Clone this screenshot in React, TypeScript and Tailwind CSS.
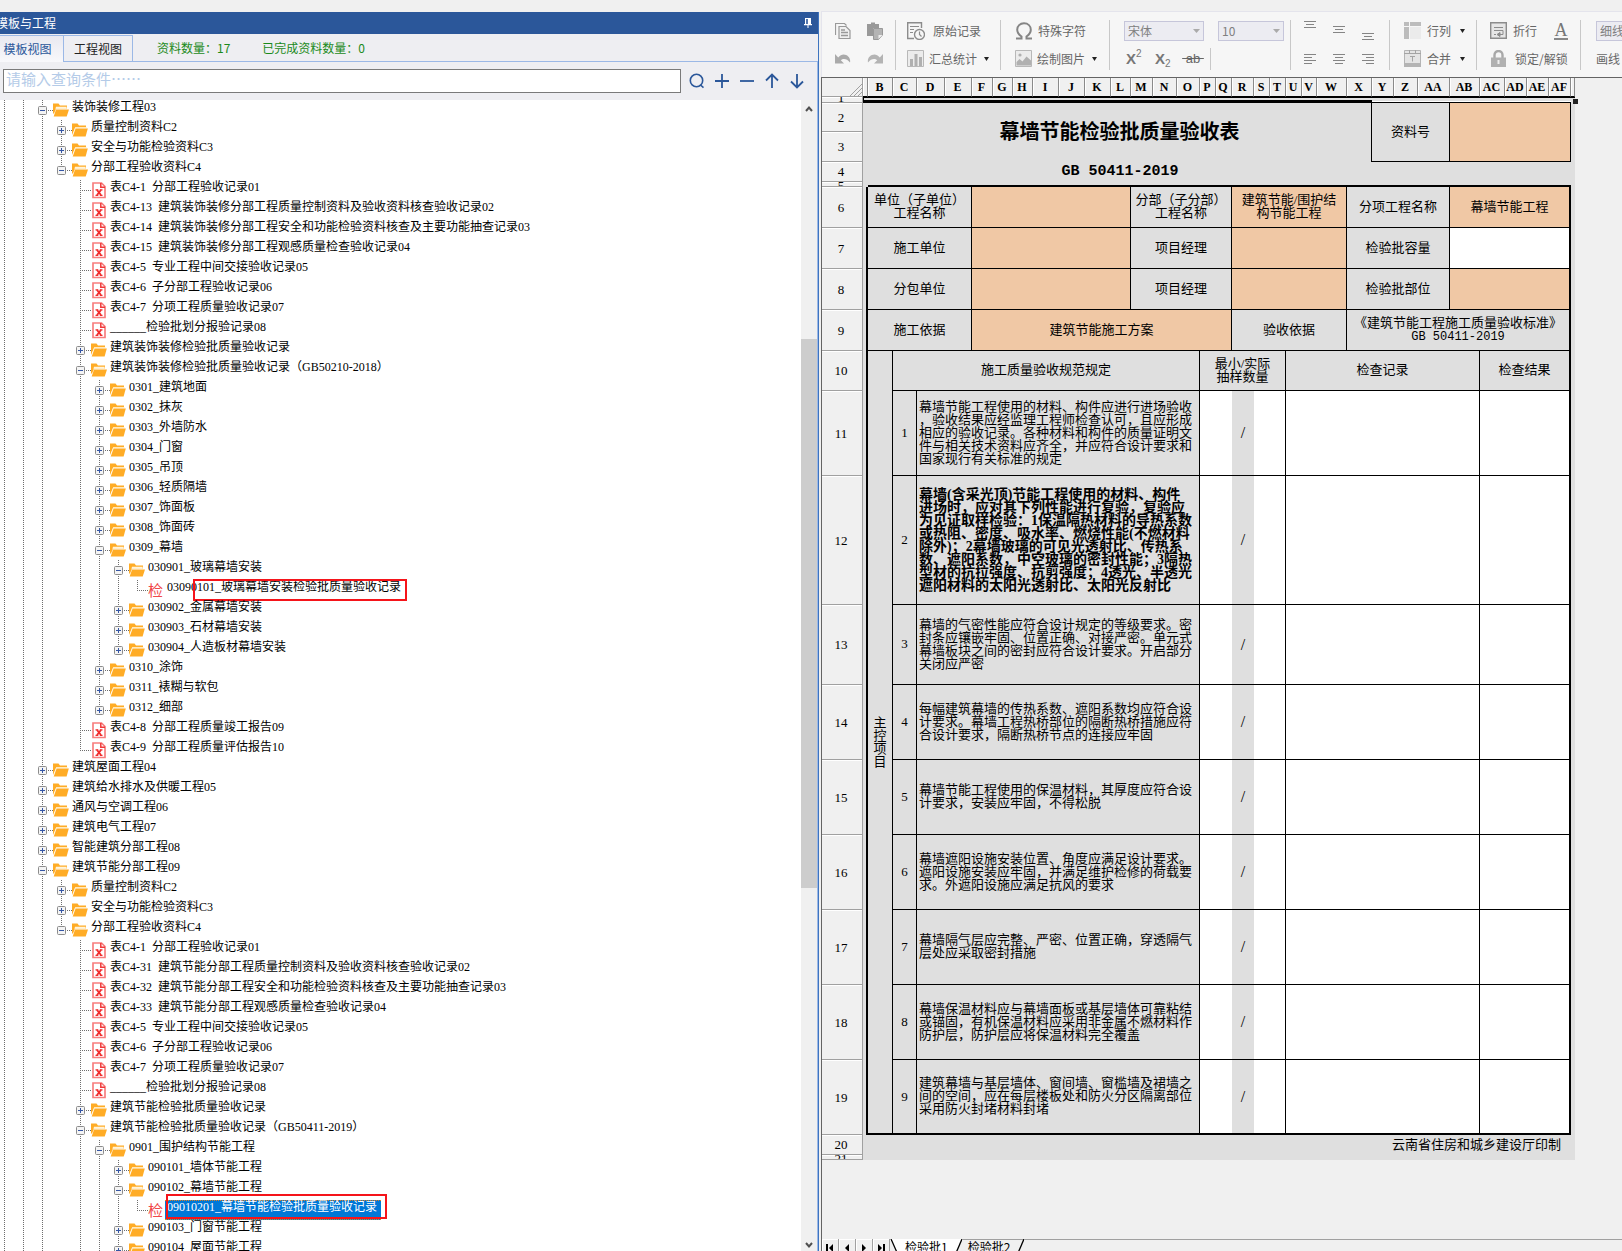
import React from "react";

type Kind = "open" | "closed" | "sheet" | "check";
type Node = { depth: number; kind: Kind; text: string; mark?: "box" | "selected" };

const n = (depth: number, kind: Kind, text: string, mark?: Node["mark"]): Node => ({ depth, kind, text, mark });

const NODES: Node[] = [
  n(0, "open", "装饰装修工程03"),
  n(1, "closed", "质量控制资料C2"),
  n(1, "closed", "安全与功能检验资料C3"),
  n(1, "open", "分部工程验收资料C4"),
  n(2, "sheet", "表C4-1  分部工程验收记录01"),
  n(2, "sheet", "表C4-13  建筑装饰装修分部工程质量控制资料及验收资料核查验收记录02"),
  n(2, "sheet", "表C4-14  建筑装饰装修分部工程安全和功能检验资料核查及主要功能抽查记录03"),
  n(2, "sheet", "表C4-15  建筑装饰装修分部工程观感质量检查验收记录04"),
  n(2, "sheet", "表C4-5  专业工程中间交接验收记录05"),
  n(2, "sheet", "表C4-6  子分部工程验收记录06"),
  n(2, "sheet", "表C4-7  分项工程质量验收记录07"),
  n(2, "sheet", "______检验批划分报验记录08"),
  n(2, "closed", "建筑装饰装修检验批质量验收记录"),
  n(2, "open", "建筑装饰装修检验批质量验收记录（GB50210-2018）"),
  n(3, "closed", "0301_建筑地面"),
  n(3, "closed", "0302_抹灰"),
  n(3, "closed", "0303_外墙防水"),
  n(3, "closed", "0304_门窗"),
  n(3, "closed", "0305_吊顶"),
  n(3, "closed", "0306_轻质隔墙"),
  n(3, "closed", "0307_饰面板"),
  n(3, "closed", "0308_饰面砖"),
  n(3, "open", "0309_幕墙"),
  n(4, "open", "030901_玻璃幕墙安装"),
  n(5, "check", "03090101_玻璃幕墙安装检验批质量验收记录", "box"),
  n(4, "closed", "030902_金属幕墙安装"),
  n(4, "closed", "030903_石材幕墙安装"),
  n(4, "closed", "030904_人造板材幕墙安装"),
  n(3, "closed", "0310_涂饰"),
  n(3, "closed", "0311_裱糊与软包"),
  n(3, "closed", "0312_细部"),
  n(2, "sheet", "表C4-8  分部工程质量竣工报告09"),
  n(2, "sheet", "表C4-9  分部工程质量评估报告10"),
  n(0, "closed", "建筑屋面工程04"),
  n(0, "closed", "建筑给水排水及供暖工程05"),
  n(0, "closed", "通风与空调工程06"),
  n(0, "closed", "建筑电气工程07"),
  n(0, "closed", "智能建筑分部工程08"),
  n(0, "open", "建筑节能分部工程09"),
  n(1, "closed", "质量控制资料C2"),
  n(1, "closed", "安全与功能检验资料C3"),
  n(1, "open", "分部工程验收资料C4"),
  n(2, "sheet", "表C4-1  分部工程验收记录01"),
  n(2, "sheet", "表C4-31  建筑节能分部工程质量控制资料及验收资料核查验收记录02"),
  n(2, "sheet", "表C4-32  建筑节能分部工程安全和功能检验资料核查及主要功能抽查记录03"),
  n(2, "sheet", "表C4-33  建筑节能分部工程观感质量检查验收记录04"),
  n(2, "sheet", "表C4-5  专业工程中间交接验收记录05"),
  n(2, "sheet", "表C4-6  子分部工程验收记录06"),
  n(2, "sheet", "表C4-7  分项工程质量验收记录07"),
  n(2, "sheet", "______检验批划分报验记录08"),
  n(2, "closed", "建筑节能检验批质量验收记录"),
  n(2, "open", "建筑节能检验批质量验收记录（GB50411-2019）"),
  n(3, "open", "0901_围护结构节能工程"),
  n(4, "closed", "090101_墙体节能工程"),
  n(4, "open", "090102_幕墙节能工程"),
  n(5, "check", "09010201_幕墙节能检验批质量验收记录", "selected"),
  n(4, "closed", "090103_门窗节能工程"),
  n(4, "closed", "090104_屋面节能工程"),
];

// Depths of the branches that carry on below the last listed node.
const TAIL_DEPTHS = [4, 3, 2, 0];

function continues(index: number, depth: number) {
  const rest = NODES.slice(index + 1).map((x) => x.depth).concat(TAIL_DEPTHS);
  for (const d of rest) {
    if (d === depth) return true;
    if (d < depth) return false;
  }
  return false;
}

function Guide({ on }: { on: boolean }) {
  return (
    <svg width="19" height="20" className="shrink-0" aria-hidden="true">
      {on && <path d="M9.5 0V20" stroke="#6e6e6e" strokeDasharray="1 1" />}
    </svg>
  );
}

function Joint({ kind, more }: { kind: Kind; more: boolean }) {
  const lines = (
    <path d={`M9.5 0V${more ? 20 : 10}M9 10.5H20`} stroke="#6e6e6e" strokeDasharray="1 1" fill="none" />
  );
  if (kind === "sheet" || kind === "check") {
    return (
      <svg width="20" height="20" className="shrink-0" aria-hidden="true">
        {lines}
      </svg>
    );
  }
  return (
    <button type="button" aria-label={kind === "open" ? "折叠" : "展开"} className="h-5 w-5 shrink-0">
      <svg width="20" height="20" aria-hidden="true">
        {lines}
        <rect x="5.5" y="6.5" width="8" height="8" rx="1" fill="#f4f4f4" stroke="#8c8c8c" />
        <path d="M7 10.5H12" stroke="#3455a4" />
        {kind === "closed" && <path d="M9.5 8V13" stroke="#3455a4" />}
      </svg>
    </button>
  );
}

function NodeIcon({ kind }: { kind: Kind }) {
  if (kind === "open")
    return (
      <svg width="16" height="20" className="shrink-0" aria-hidden="true">
        <path d="M0 3.5h5.5l1.5 2h7v3H3L1 13.5H0z" fill="#ffac26" />
        <path d="M3 6.8h10.6v2H2.4z" fill="#fff4dc" />
        <path d="M3 9.5h13l-2.3 7H.7z" fill="#ffac26" />
      </svg>
    );
  if (kind === "closed")
    return (
      <svg width="16" height="20" className="shrink-0" aria-hidden="true">
        <path d="M0 3.5h5.5l1.5 2h7v2H3.2L0 15z" fill="#ffac26" />
        <path d="M3.2 7.3h11.5v.9H3.6L.8 14z" fill="#fff0cc" />
        <path d="M3.6 8.4h12.2l-2.2 8.1H.7z" fill="#ffac26" />
      </svg>
    );
  if (kind === "sheet")
    return (
      <svg width="16" height="20" className="shrink-0" fill="none" aria-hidden="true">
        <path d="M2 3h8.5L14 6.5V17.5H2z" stroke="#f77f7f" strokeWidth="1.7" />
        <path d="M9.8 3v4.200H14" stroke="#f03a3a" strokeWidth="1.5" />
        <path d="M6 10l4 5M10 10l-4 5" stroke="#f02c2c" strokeWidth="1.9" />
        <path d="M4.500 9.800h2.800M8.800 9.800h2.700M4.500 15.300h2.800M8.800 15.300h2.700" stroke="#f02c2c" strokeWidth="1.2" />
      </svg>
    );
  return <span className="w-4 shrink-0 pt-0.5 text-[15px] leading-[18px] text-[#f04848]">检</span>;
}

function TreeRow({ node, index }: { node: Node; index: number }) {
  const selected = node.mark === "selected";
  return (
    <li role="treeitem" aria-level={node.depth + 1} aria-selected={selected} className="relative -ml-[5px] flex h-5 items-start">
      <Guide on />
      <Guide on />
      {Array.from({ length: node.depth }, (_, d) => (
        <Guide key={d} on={continues(index, d)} />
      ))}
      <Joint kind={node.kind} more={continues(index, node.depth)} />
      <NodeIcon kind={node.kind} />
      {selected ? (
        <span className="relative ml-px h-5 border-y border-dotted border-[#e08020] bg-[#0078d7] pr-1 pl-0.5 leading-3 whitespace-pre text-white">
          {node.text}
          <span className="absolute -top-[7px] -right-1.5 left-px h-[25px] border-2 border-[#f5141a]" />
        </span>
      ) : (
        <span className="relative ml-[3px] leading-[14px] whitespace-pre text-black">
          {node.text}
          {node.mark === "box" && (
            <span className="absolute -top-px -right-1.5 left-[26px] h-[22px] border-2 border-[#f5141a]" />
          )}
        </span>
      )}
    </li>
  );
}

const btnIcon = "flex h-6 w-[25px] items-center justify-center text-[#2b579a]";

function LeftPanel() {
  return (
    <section className="flex min-w-0 flex-col overflow-hidden border-r border-[#3e74c0] bg-[#eeeef2] text-xs">
      <header className="flex h-[22px] shrink-0 items-center justify-between bg-[#2b579a] pr-[5px] text-white">
        <h1 className="-ml-1">模板与工程</h1>
        <button type="button" aria-label="固定">
          <svg width="9" height="10" aria-hidden="true">
            <path d="M1 0h6v6H1zM0 6h8v1.300H0zM3.500 7h1v3h-1z" fill="#fff" />
            <path d="M2.200 1h1.600v5H2.200z" fill="#2b579a" />
          </svg>
        </button>
      </header>
      <div className="mt-px flex h-[27px] shrink-0">
        <div className="flex" role="tablist">
          <button type="button" role="tab" aria-selected="true" className="w-[63px] border-t border-[#9bb8e6] bg-gradient-to-b from-[#e9e9f0] to-[#f8f8fb] pr-2 text-[#2b579a]">
            模板视图
          </button>
          <button type="button" role="tab" aria-selected="false" className="w-[70px] border border-[#9bb8e6] text-[#222]">
            工程视图
          </button>
        </div>
        <p className="flex flex-1 items-center gap-8 border-b border-[#9bb8e6] pl-6 text-[#1a8a1a]">
          <span>资料数量：17</span>
          <span>已完成资料数量：0</span>
        </p>
      </div>
      <div className="flex min-h-0 flex-1 flex-col border-r border-[#9bb8e6]">
        <div className="flex h-[38px] shrink-0 items-center pr-2 pl-[3px]">
          <input
            aria-label="查询条件"
            placeholder="请输入查询条件……"
            className="h-6 min-w-0 flex-1 border border-[#7a7a7a] bg-white px-0.5 pb-1.5 text-[15px] leading-4 outline-none placeholder:text-[#b4cbe8]"
          />
          <div className="ml-[3px] flex">
            <button type="button" aria-label="查询" className={btnIcon}>
              <svg width="16" height="16" fill="none" stroke="currentColor" strokeWidth="1.6" aria-hidden="true">
                <circle cx="7.5" cy="7.5" r="6.2" />
                <path d="M11.5 12l3 2.6" />
              </svg>
            </button>
            <button type="button" aria-label="展开" className={btnIcon}>
              <svg width="16" height="16" stroke="currentColor" strokeWidth="1.8" aria-hidden="true"><path d="M8 1v14M1 8h14" /></svg>
            </button>
            <button type="button" aria-label="折叠" className={btnIcon}>
              <svg width="16" height="16" stroke="currentColor" strokeWidth="1.8" aria-hidden="true"><path d="M1 8h14" /></svg>
            </button>
            <button type="button" aria-label="上一个" className={btnIcon}>
              <svg width="16" height="16" fill="none" stroke="currentColor" strokeWidth="1.8" aria-hidden="true"><path d="M8 15V2M2 7.5L8 1.5l6 6" /></svg>
            </button>
            <button type="button" aria-label="下一个" className={btnIcon}>
              <svg width="16" height="16" fill="none" stroke="currentColor" strokeWidth="1.8" aria-hidden="true"><path d="M8 1v13M2 8.500l6 6 6-6" /></svg>
            </button>
          </div>
        </div>
        <div className="flex min-h-0 flex-1 bg-white">
          <ul role="tree" aria-label="资料目录" className="min-w-0 flex-1 overflow-hidden font-['Liberation_Serif','Noto_Sans_CJK_SC',serif]">
            {NODES.map((node, i) => (
              <TreeRow key={i} node={node} index={i} />
            ))}
          </ul>
          <div className="flex w-4 shrink-0 flex-col items-center bg-[#f0f0f0]">
            <svg width="8" height="18" fill="none" stroke="#505050" strokeWidth="2" aria-hidden="true"><path d="M1 11l3-3.500 3 3.500" /></svg>
            <div className="flex w-full flex-1 flex-col">
              <div className="grow-[221]" />
              <div className="grow-[549] bg-[#cdcdcd]" />
              <div className="grow-[351]" />
            </div>
            <svg width="8" height="12" fill="none" stroke="#505050" strokeWidth="2" aria-hidden="true"><path d="M1 4l3 3.500 3-3.500" /></svg>
          </div>
        </div>
      </div>
    </section>
  );
}

function Caret() {
  return <svg width="5" height="4" aria-hidden="true"><path d="M0 0h5L2.500 4z" fill="#222" /></svg>;
}

function Align({ label, lines, pad }: { label: string; lines: [number, number][]; pad: "top" | "mid" | "low" }) {
  const y = pad === "top" ? 1 : pad === "mid" ? 6 : 13;
  return (
    <button type="button" aria-label={label}>
      <svg width="12" height="22" stroke="#858585" aria-hidden="true">
        {lines.map(([a, b], i) => (
          <path key={i} d={`M${a} ${y + i * 3 + 0.5}H${b}`} />
        ))}
      </svg>
    </button>
  );
}

const group = "flex flex-col justify-between border-r border-[#c8c8c8]";
const line = "flex h-[22px] items-center";

function Combo({ label, value, className }: { label: string; value: string; className: string }) {
  return (
    <span className={"relative shrink-0 " + className}>
      <select aria-label={label} disabled className="h-5 w-full appearance-none border border-[#c6c6da] bg-[#ececf2] pl-[3px] text-xs leading-4 text-[#808080]">
        <option>{value}</option>
      </select>
      <svg width="7" height="4" className="absolute top-2 right-1" aria-hidden="true"><path d="M0 0h7L3.500 4z" fill="#aaa" /></svg>
    </span>
  );
}

const centred: [number, number][] = [[0, 12], [2, 10], [0, 12]];

function Toolbar() {
  return (
    <div className="h-[66px] shrink-0 overflow-hidden border-t border-l border-[#e4e4ec] bg-[#f6f6f6] pt-2 text-xs whitespace-nowrap text-[#666]">
      <div className="grid h-[50px] grid-cols-[74px_105px_109px_181px_99px_87px_104px_1fr]">
        <div className={group + " pl-[13px]"}>
          <div className={line + " gap-4"}>
            <button type="button" aria-label="复制">
              <svg width="16" height="18" fill="none" stroke="#999" aria-hidden="true">
                <path d="M.5 13V1.500h9l2 2" strokeWidth="1.200" />
                <path d="M4 4.500h7l4 4V16.500H4z" fill="#f0f0f0" strokeWidth="1.200" />
                <path d="M6 8h4M6 10.500h7M6 13.500h7" strokeWidth="1.300" />
              </svg>
            </button>
            <button type="button" aria-label="粘贴">
              <svg width="16" height="18" aria-hidden="true">
                <path d="M0 2h4V.500h4V2h4v4H6v8H0z" fill="#999" />
                <path d="M6.500 6.500h9V13l-4 4.500h-5z" fill="#b4b4b4" stroke="#999" />
                <path d="M11.500 17v-4h4z" fill="#eee" />
              </svg>
            </button>
          </div>
          <div className={line + " gap-4"}>
            <button type="button" aria-label="撤销">
              <svg width="16" height="14" aria-hidden="true"><path d="M0 2v9.500h9L5.800 8.300C8 6.300 12 6.500 15 10.500 16.500 4 8 -1 3.200 5.500z" fill="#aaa" /></svg>
            </button>
            <button type="button" aria-label="重做">
              <svg width="16" height="14" aria-hidden="true"><path d="M16 2v9.500H7l3.200-3.200C8 6.300 4 6.500 1 10.500-.500 4 8-1 12.800 5.500z" fill="#b4b4b4" /></svg>
            </button>
          </div>
        </div>
        <div className={group + " pl-[11px]"}>
          <button type="button" className={line + " gap-2"}>
            <svg width="18" height="18" fill="none" stroke="#8c8c8c" aria-hidden="true">
              <path d="M14.500 6V.700H.700V16.500H7" strokeWidth="1.400" />
              <path d="M3 4.500h9M3 7.500h4M3 10.500h3" />
              <circle cx="12.500" cy="12.500" r="5" strokeWidth="1.400" />
              <path d="M12.500 9.500v3l2 2" strokeWidth="1.200" />
            </svg>
            原始记录
          </button>
          <button type="button" className={line + " gap-1"}>
            <svg width="18" height="18" aria-hidden="true">
              <path d="M.500.500h16v16H.500z" fill="#ececec" stroke="#b8b8b8" />
              <path d="M3 9h3v7H3zM7.500 4h3v12h-3zM12 7h3v9h-3z" fill="#b0b0b0" />
            </svg>
            汇总统计
            <span className="pl-[3px]"><Caret /></span>
          </button>
        </div>
        <div className={group + " pl-[14px]"}>
          <button type="button" className={line + " gap-[5px]"}>
            <svg width="18" height="18" fill="none" stroke="#858585" strokeWidth="2" aria-hidden="true">
              <path d="M1 16.500h5.500v-2C3.500 12.500 2.200 10.500 2.200 7.800 2.200 4 5 1.300 9 1.300s6.800 2.700 6.800 6.500c0 2.700-1.300 4.700-4.300 6.700v2H17" />
            </svg>
            特殊字符
          </button>
          <button type="button" className={line + " gap-1"}>
            <svg width="18" height="18" aria-hidden="true">
              <path d="M.500.500h16v16H.500z" fill="#ececec" stroke="#b8b8b8" />
              <path d="M1.500 12l3-3 3 2.500 4-5 4.500 4V15.500h-14.500z" fill="#b0b0b0" />
              <circle cx="5" cy="5" r="1.600" fill="#b0b0b0" />
            </svg>
            绘制图片
            <span className="pl-[3px]"><Caret /></span>
          </button>
        </div>
        <div className={group + " pl-[14px]"}>
          <div className={line + " gap-[14px]"}>
            <Combo label="字体" value="宋体" className="w-20" />
            <Combo label="字号" value="10" className="w-[66px]" />
          </div>
          <div className={line + " pl-0.5 font-['Liberation_Sans','Noto_Sans_CJK_SC',sans-serif]"}>
            <button type="button" aria-label="上标" className="flex w-[29px] items-start text-[15px] leading-5 font-bold text-[#777]">
              X<span className="text-[10px] leading-[10px] font-normal">2</span>
            </button>
            <button type="button" aria-label="下标" className="flex w-[29px] items-end text-[15px] leading-5 font-bold text-[#777]">
              X<span className="text-[10px] leading-[10px] font-normal">2</span>
            </button>
            <button type="button" aria-label="删除线" className="flex w-[18px] justify-center text-[13px] line-through">&nbsp;ab&nbsp;</button>
            <span className="ml-2 h-[22px] border-l border-[#c8c8c8]" />
          </div>
        </div>
        <div className={group + " pl-[13px]"}>
          <div className={line + " gap-[17px]"}>
            <Align label="顶端对齐" lines={centred} pad="top" />
            <Align label="垂直居中" lines={centred} pad="mid" />
            <Align label="底端对齐" lines={centred} pad="low" />
          </div>
          <div className={line + " gap-[17px]"}>
            <Align label="左对齐" lines={[[0, 12], [0, 8], [0, 12], [0, 8]]} pad="mid" />
            <Align label="居中" lines={[[0, 12], [2, 10], [0, 12], [2, 10]]} pad="mid" />
            <Align label="右对齐" lines={[[0, 12], [4, 12], [0, 12], [4, 12]]} pad="mid" />
          </div>
        </div>
        <div className={group + " pl-[14px]"}>
          <button type="button" className={line + " gap-[5px]"}>
            <svg width="18" height="18" aria-hidden="true">
              <path d="M0 0h5v4H0zM6 0h11v4H6zM0 5h5v12H0z" fill="#bcbcbc" />
              <path d="M6 5h11v12H6z" fill="#ebebeb" />
            </svg>
            行列
            <span className="pl-1"><Caret /></span>
          </button>
          <button type="button" className={line + " gap-[5px]"}>
            <svg width="18" height="18" aria-hidden="true">
              <path d="M.500.500h16v16H.500z" fill="#e4e4e4" stroke="#b4b4b4" />
              <path d="M0 3.500h17M5.500 0v3M11.500 0v3M6 6.500h5M8.500 6.500v5" stroke="#a4a4a4" />
              <path d="M0 13h17v4H0z" fill="#b4b4b4" />
            </svg>
            合并
            <span className="pl-1"><Caret /></span>
          </button>
        </div>
        <div className={group + " pl-[13px]"}>
          <div className={line}>
            <button type="button" className="flex items-center gap-[5px]">
              <svg width="18" height="18" fill="none" stroke="#8c8c8c" aria-hidden="true">
                <path d="M.700.700h15.600v15.600H.700z" fill="#e6e6e6" strokeWidth="1.400" />
                <path d="M4 5.500h9M4 8.500h9M13 8.500v4H9" />
                <path d="M10 10.500v4l-3-2zM4 12.500h2" fill="#8c8c8c" />
              </svg>
              折行
            </button>
            <button type="button" aria-label="字体颜色" className="ml-[17px]">
              <span className="block w-[14px] border-b-2 border-[#888] text-center font-['Liberation_Serif',serif] text-lg leading-4 text-[#777]">A</span>
            </button>
          </div>
          <button type="button" className={line + " gap-[7px]"}>
            <svg width="18" height="18" fill="none" aria-hidden="true">
              <path d="M4.500 8V5a4 4 0 018 0v3" stroke="#a8a8a8" strokeWidth="2.400" />
              <path d="M1 7.500h15v9.500H1z" fill="#b0b0b0" />
              <path d="M8.500 10v4" stroke="#eee" strokeWidth="2" />
            </svg>
            锁定/解锁
          </button>
        </div>
        <div className="flex flex-col justify-between pl-[15px]">
          <div className={line}>
            <Combo label="线型" value="细线" className="w-20" />
          </div>
          <button type="button" className={line}>画线</button>
        </div>
      </div>
    </div>
  );
}

const COLS: [string, string][] = [
  ["", "w-[5px]"], ["B", "w-[25px]"], ["C", "w-[24px]"], ["D", "w-[28px]"], ["E", "w-[27px]"], ["F", "w-[21px]"],
  ["G", "w-[20px]"], ["H", "w-[20px]"], ["I", "w-[26px]"], ["J", "w-[26px]"], ["K", "w-[26px]"], ["L", "w-[20px]"],
  ["M", "w-[22px]"], ["N", "w-[24px]"], ["O", "w-[23px]"], ["P", "w-[16px]"], ["Q", "w-[16px]"], ["R", "w-[22px]"],
  ["S", "w-[16px]"], ["T", "w-[16px]"], ["U", "w-[16px]"], ["V", "w-[15px]"], ["W", "w-[30px]"], ["X", "w-[25px]"],
  ["Y", "w-[22px]"], ["Z", "w-[24px]"], ["AA", "w-[32px]"], ["AB", "w-[30px]"], ["AC", "w-[25px]"], ["AD", "w-[22px]"],
  ["AE", "w-[22px]"], ["AF", "w-[22px]"], ["", "w-[4px]"],
];

function RowHead({ children }: { children: React.ReactNode }) {
  return (
    <th scope="row" className="border-r border-b border-[#a0a0a0] bg-[#f0f0f0] p-0 pr-0.5 font-normal shadow-[inset_0_1px_0_#fff]">
      {children}
    </th>
  );
}

const TONES = {
  grey: "bg-[#dfdfdf]",
  orange: "bg-[#f0c8a5]",
  white: "bg-white",
};

function Cell({ span = 1, rows = 1, tone = "grey", className = "", children }: {
  span?: number; rows?: number; tone?: keyof typeof TONES; className?: string; children?: React.ReactNode;
}) {
  return (
    <td colSpan={span} rowSpan={rows} className={"border-black p-0 whitespace-pre " + TONES[tone] + " " + className}>
      {children}
    </td>
  );
}

const grid = "border-r border-b pb-0.5 text-center";
const gridEnd = "border-r-2 border-b pb-0.5 text-center";
const gridBottom = "border-r border-b-2 text-center";
const gridEndBottom = "border-r-2 border-b-2 text-center";
const Edge = () => <Cell className="border-r-2" />;

const ITEMS: { row: number; h: string; text: string; bold?: boolean }[] = [
  { row: 11, h: "h-[85px]", text: "幕墙节能工程使用的材料、构件应进行进场验收\n，验收结果应经监理工程师检查认可，且应形成\n相应的验收记录。各种材料和构件的质量证明文\n件与相关技术资料应齐全，并应符合设计要求和\n国家现行有关标准的规定" },
  { row: 12, h: "h-[129px]", bold: true, text: "幕墙(含采光顶)节能工程使用的材料、构件\n进场时，应对其下列性能进行复验，复验应\n为见证取样检验：1保温隔热材料的导热系数\n或热阻、密度、吸水率、燃烧性能(不燃材料\n除外)；2幕墙玻璃的可见光透射比、传热系\n数、遮阳系数，中空玻璃的密封性能；3隔热\n型材的抗拉强度、抗剪强度；4透光、半透光\n遮阳材料的太阳光透射比、太阳光反射比" },
  { row: 13, h: "h-[80px]", text: "幕墙的气密性能应符合设计规定的等级要求。密\n封条应镶嵌牢固、位置正确、对接严密。单元式\n幕墙板块之间的密封应符合设计要求。开启部分\n关闭应严密" },
  { row: 14, h: "h-[75px]", text: "每幅建筑幕墙的传热系数、遮阳系数均应符合设\n计要求。幕墙工程热桥部位的隔断热桥措施应符\n合设计要求，隔断热桥节点的连接应牢固" },
  { row: 15, h: "h-[75px]", text: "幕墙节能工程使用的保温材料，其厚度应符合设\n计要求，安装应牢固，不得松脱" },
  { row: 16, h: "h-[75px]", text: "幕墙遮阳设施安装位置、角度应满足设计要求。\n遮阳设施安装应牢固，并满足维护检修的荷载要\n求。外遮阳设施应满足抗风的要求" },
  { row: 17, h: "h-[75px]", text: "幕墙隔气层应完整、严密、位置正确，穿透隔气\n层处应采取密封措施" },
  { row: 18, h: "h-[75px]", text: "幕墙保温材料应与幕墙面板或基层墙体可靠粘结\n或锚固，有机保温材料应采用非金属不燃材料作\n防护层，防护层应将保温材料完全覆盖" },
  { row: 19, h: "h-[75px]", text: "建筑幕墙与基层墙体、窗间墙、窗槛墙及裙墙之\n间的空间，应在每层楼板处和防火分区隔离部位\n采用防火封堵材料封堵" },
];

function Sheet() {
  return (
    <table className="w-[753px] table-fixed border-separate border-spacing-0 font-['Liberation_Serif','Noto_Sans_CJK_SC',serif] text-[13px] leading-[13px] text-black">
      <colgroup>
        <col className="w-[41px]" />
        {COLS.map(([, w], i) => (
          <col key={i} className={w} />
        ))}
      </colgroup>
      <thead>
        <tr className="h-[19px]">
          <td className="border-r border-b border-[#a0a0a0] bg-[#f0f0f0] p-0">
            <svg width="12" height="12" className="mt-1.5 ml-auto" stroke="#a0a0a0" aria-hidden="true">
              <path d="M0 12L12 0M4 12l8-8M8 12l4-4" />
            </svg>
          </td>
          {COLS.map(([name], i) => (
            <th
              key={i}
              scope="col"
              className="border-r border-b border-r-[#8a8a8a] border-b-black bg-[#f0f0f0] p-0 pr-px text-xs leading-3 font-bold shadow-[inset_1px_0_0_#fff]"
            >
              {name}
            </th>
          ))}
        </tr>
      </thead>
      <tbody>
        <tr className="h-[6px]">
          <RowHead><div className="h-[5px] overflow-hidden leading-[1px]">1</div></RowHead>
          <Cell span={24} className="border-t border-b-[3px] border-l border-[#222] leading-[1px]" />
          <Cell span={8} className="border-t border-b border-[#222] shadow-[inset_0_-1px_0_#fff]" />
          <Cell className="relative border-t border-[#222]">
            <span className="absolute top-px -right-[3px] h-[5px] w-[5px] bg-[#222]" />
          </Cell>
        </tr>
        <tr className="h-[29px]">
          <RowHead>2</RowHead>
          <Cell rows={2} />
          <Cell span={23} rows={2} className="border-r pb-0.5 text-center text-xl leading-6 font-bold">幕墙节能检验批质量验收表</Cell>
          <Cell span={3} rows={2} className={grid}>资料号</Cell>
          <Cell span={5} rows={2} tone="orange" className={grid} />
          <Cell rows={2} />
        </tr>
        <tr className="h-[30px]"><RowHead>3</RowHead></tr>
        <tr className="h-5">
          <RowHead>4</RowHead>
          <Cell />
          <Cell span={23} className="text-center font-['Liberation_Mono',monospace] text-[15px] leading-4 font-bold">GB 50411-2019</Cell>
          <Cell span={9} />
        </tr>
        <tr className="h-[5px]">
          <RowHead><div className="h-1 overflow-hidden leading-[8px]">5</div></RowHead>
          <Cell />
          <Cell span={31} className="border-b-2" />
          <Cell />
        </tr>
        <tr className="h-[41px]">
          <RowHead>6</RowHead>
          <Edge />
          <Cell span={4} className={grid}>{"单位（子单位）\n工程名称"}</Cell>
          <Cell span={7} tone="orange" className={grid} />
          <Cell span={5} className={grid}>{"分部（子分部）\n工程名称"}</Cell>
          <Cell span={6} tone="orange" className={grid}>{"建筑节能/围护结\n构节能工程"}</Cell>
          <Cell span={4} className={grid}>分项工程名称</Cell>
          <Cell span={5} tone="orange" className={gridEnd}>幕墙节能工程</Cell>
          <Cell />
        </tr>
        <tr className="h-[41px]">
          <RowHead>7</RowHead>
          <Edge />
          <Cell span={4} className={grid}>施工单位</Cell>
          <Cell span={7} tone="orange" className={grid} />
          <Cell span={5} className={grid}>项目经理</Cell>
          <Cell span={6} tone="orange" className={grid} />
          <Cell span={4} className={grid}>检验批容量</Cell>
          <Cell span={5} tone="white" className={gridEnd} />
          <Cell />
        </tr>
        <tr className="h-[41px]">
          <RowHead>8</RowHead>
          <Edge />
          <Cell span={4} className={grid}>分包单位</Cell>
          <Cell span={7} tone="orange" className={grid} />
          <Cell span={5} className={grid}>项目经理</Cell>
          <Cell span={6} tone="orange" className={grid} />
          <Cell span={4} className={grid}>检验批部位</Cell>
          <Cell span={5} tone="orange" className={gridEnd} />
          <Cell />
        </tr>
        <tr className="h-[41px]">
          <RowHead>9</RowHead>
          <Edge />
          <Cell span={4} className={grid}>施工依据</Cell>
          <Cell span={12} tone="orange" className={grid}>建筑节能施工方案</Cell>
          <Cell span={6} className={grid}>验收依据</Cell>
          <Cell span={9} className={gridEnd}>
            {"《建筑节能工程施工质量验收标准》\n"}
            <span className="font-['Liberation_Mono',monospace] text-xs leading-3">GB 50411-2019</span>
          </Cell>
          <Cell />
        </tr>
        <tr className="h-[40px]">
          <RowHead>10</RowHead>
          <Edge />
          <Cell rows={10} className={gridBottom}>{"主\n控\n项\n目"}</Cell>
          <Cell span={13} className={grid}>施工质量验收规范规定</Cell>
          <Cell span={5} className={grid}>{"最小/实际\n抽样数量"}</Cell>
          <Cell span={8} className={grid}>检查记录</Cell>
          <Cell span={4} className={gridEnd}>检查结果</Cell>
          <Cell />
        </tr>
        {ITEMS.map((item, i) => {
          const last = i === ITEMS.length - 1;
          const g = last ? gridBottom : grid;
          const open = last ? "border-b-2 text-center text-base leading-4" : "border-b text-center text-base leading-4";
          return (
            <tr key={item.row} className={item.h}>
              <RowHead>{item.row}</RowHead>
              <Edge />
              <Cell className={g}>{i + 1}</Cell>
              <Cell
                span={12}
                className={
                  (last ? "border-r border-b-2 " : "border-r border-b ") +
                  (item.bold ? "pl-0.5 text-left text-sm leading-[13px] font-bold" : "pb-0.5 pl-0.5 text-left")
                }
              >
                {item.text}
              </Cell>
              <Cell span={2} tone="white" className={open} />
              <Cell className={open}>/</Cell>
              <Cell span={2} tone="white" className={g} />
              <Cell span={8} tone="white" className={g} />
              <Cell span={4} tone="white" className={last ? gridEndBottom : gridEnd} />
              <Cell />
            </tr>
          );
        })}
        <tr className="h-5">
          <RowHead>20</RowHead>
          <Cell span={32} className="pr-2.5 pb-0.5 text-right">云南省住房和城乡建设厅印制</Cell>
          <Cell />
        </tr>
        <tr className="h-[5px]">
          <RowHead><div className="h-1 overflow-hidden leading-[8px]">21</div></RowHead>
          <Cell span={33} />
        </tr>
      </tbody>
    </table>
  );
}

const nav = "flex h-5 w-[17px] justify-center border-r border-[#a0a0a0] bg-[#f0f0f0] pt-[5px] shadow-[inset_1px_1px_0_#fff]";

function SheetTabs() {
  return (
    <div className="flex h-3 shrink-0 items-start border-l border-[#646464] text-xs leading-3 text-black shadow-[inset_0_1px_0_#a0a0a0]">
      <button type="button" aria-label="第一张" className={nav}>
        <svg width="8" height="8"><path d="M0 0h2v8H0zM7 0v8L3 4z" /></svg>
      </button>
      <button type="button" aria-label="上一张" className={nav}>
        <svg width="8" height="8"><path d="M6 0v8L2 4z" /></svg>
      </button>
      <button type="button" aria-label="下一张" className={nav}>
        <svg width="8" height="8"><path d="M2 0v8l4-4z" /></svg>
      </button>
      <button type="button" aria-label="最后一张" className={nav}>
        <svg width="8" height="8"><path d="M6 0h2v8H6zM1 0v8l4-4z" /></svg>
      </button>
      <svg width="8" height="20" className="ml-px shrink-0"><path d="M0 0h8v20z" fill="#fff" /><path d="M0 0l8 18" stroke="#000" strokeWidth="1.300" /></svg>
      <button type="button" className="h-5 bg-white px-1.5 pb-[5px]">检验批1</button>
      <svg width="8" height="20" className="shrink-0"><path d="M0 0h8L0 20z" fill="#fff" /><path d="M8 0L2 14" stroke="#000" strokeWidth="1.300" /></svg>
      <button type="button" className="h-5 px-1.5 pb-[5px]">检验批2</button>
      <svg width="8" height="20" className="shrink-0"><path d="M8 0L2 14" stroke="#000" strokeWidth="1.300" /></svg>
    </div>
  );
}

export default function App() {
  return (
    <div
      lang="zh-CN"
      className="grid h-screen grid-cols-[819fr_803fr] overflow-hidden bg-[#f0f0f0] pt-3 font-['Noto_Sans_CJK_SC',sans-serif] [text-spacing-trim:space-all] [&_button]:cursor-default"
    >
      <LeftPanel />
      <main className="-mt-px ml-0.5 flex min-w-0 flex-col overflow-hidden">
        <Toolbar />
        <div className="min-h-0 flex-1 overflow-hidden border-t border-l border-[#646464]">
          <Sheet />
        </div>
        <SheetTabs />
      </main>
    </div>
  );
}
